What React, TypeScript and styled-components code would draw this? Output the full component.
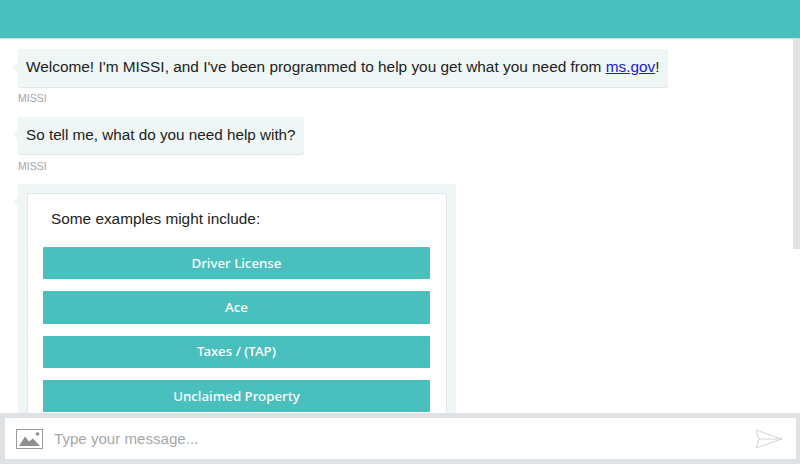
import React from 'react'
import styled, { createGlobalStyle } from 'styled-components'

const GlobalStyle = createGlobalStyle`
  html, body {
    margin: 0;
    padding: 0;
    background: #fff;
  }
  * {
    box-sizing: border-box;
  }
`

const Page = styled.div`
  width: 800px;
  height: 464px;
  display: flex;
  flex-direction: column;
  overflow: hidden;
  font-family: "Liberation Sans", Arial, sans-serif;
  color: #222;
`

const Header = styled.header`
  flex: 0 0 38px;
  background: #49c0bd;
  box-shadow: 0 1px 1px #d8dcdf;
`

const ChatArea = styled.main`
  position: relative;
  flex: 1;
  min-height: 0;
  overflow: hidden;
  padding: 11px 0 0 18px;
`

const ScrollThumb = styled.div`
  position: absolute;
  top: 1px;
  right: 0;
  width: 7px;
  height: 210px;
  background: #dfe2e5;
`

const Message = styled.div`
  display: flex;
  flex-direction: column;
  align-items: flex-start;
  margin-bottom: 12.7px;
`

const Bubble = styled.div<{ $card?: boolean; $size?: number }>`
  position: relative;
  padding: ${p => (p.$card ? '9px' : '0 8px 2px')};
  min-height: 37.5px;
  display: flex;
  align-items: center;
  background: #eff6f6;
  border-radius: 3px;
  box-shadow: 0 1px 1px #dde3e5;
  font-size: ${p => p.$size ?? 15.4}px;
  line-height: 35px;

  &::before {
    content: '';
    position: absolute;
    left: -5px;
    top: 13px;
    border-style: solid;
    border-width: 5px 5px 5px 0;
    border-color: transparent #eff6f6 transparent transparent;
  }

  a {
    color: #1a1ad6;
  }
`

const Sender = styled.div`
  margin-top: 5.5px;
  font-size: 10.5px;
  line-height: 12px;
  color: #a3a5a7;
`

const Card = styled.div`
  width: 420px;
  background: #fff;
  border: 1px solid #dfe8ed;
  padding: 15px 16px 40px 15px;
`

const CardTitle = styled.div`
  padding-left: 8px;
  margin-bottom: 18.6px;
  font-size: 15.36px;
  line-height: 19px;
`

const OptionList = styled.div`
  display: flex;
  flex-direction: column;
  gap: 12px;
`

const OptionButton = styled.button`
  height: 32.3px;
  padding: 0 0 1px;
  border: 0;
  border-radius: 1px;
  background: #49c0bd;
  color: #fff;
  font-family: "Noto Sans", "Open Sans", sans-serif;
  font-size: 13.3px;
  font-weight: 500;
`

const Footer = styled.footer`
  flex: 0 0 51px;
  padding: 5px 4px 5px 5px;
  background: #dfe2e5;
`

const InputBar = styled.div`
  height: 41px;
  display: flex;
  align-items: center;
  padding: 0 13px 0 11px;
  background: #fff;
`

const Placeholder = styled.div`
  flex: 1;
  margin-left: 11px;
  font-size: 15.1px;
  color: #a6a8aa;
`

const options = ['Driver License', 'Ace', 'Taxes / (TAP)', 'Unclaimed Property']

function ImageIcon() {
  return (
    <svg width="27" height="20" viewBox="0 0 27 20">
      <rect x="0.5" y="0.5" width="26" height="19" fill="#fff" stroke="#999" />
      <path d="M3 17 L9 7.5 L13 12.5 L17 9.5 L24 17 Z" fill="#8f8f8f" />
      <circle cx="21.5" cy="5" r="1.8" fill="#8f8f8f" />
    </svg>
  )
}

function SendIcon() {
  return (
    <svg width="28" height="20" viewBox="0 0 28 20" fill="none" stroke="#d4d4d4" strokeWidth="1">
      <path d="M1 1 L27 10 L1 19 L4 10 Z" />
      <path d="M4 10 H27" />
    </svg>
  )
}

export default function App() {
  return (
    <Page>
      <GlobalStyle />
      <Header />
      <ChatArea>
        <Message>
          <Bubble>
            <span>
              Welcome! I'm MISSI, and I've been programmed to help you get what you need from <a href="#">ms.gov</a>!
            </span>
          </Bubble>
          <Sender>MISSI</Sender>
        </Message>
        <Message>
          <Bubble $size={15.25}>So tell me, what do you need help with?</Bubble>
          <Sender>MISSI</Sender>
        </Message>
        <Message>
          <Bubble $card>
            <Card>
              <CardTitle>Some examples might include:</CardTitle>
              <OptionList>
                {options.map(o => (
                  <OptionButton key={o}>{o}</OptionButton>
                ))}
              </OptionList>
            </Card>
          </Bubble>
        </Message>
        <ScrollThumb />
      </ChatArea>
      <Footer>
        <InputBar>
          <ImageIcon />
          <Placeholder>Type your message...</Placeholder>
          <SendIcon />
        </InputBar>
      </Footer>
    </Page>
  )
}
